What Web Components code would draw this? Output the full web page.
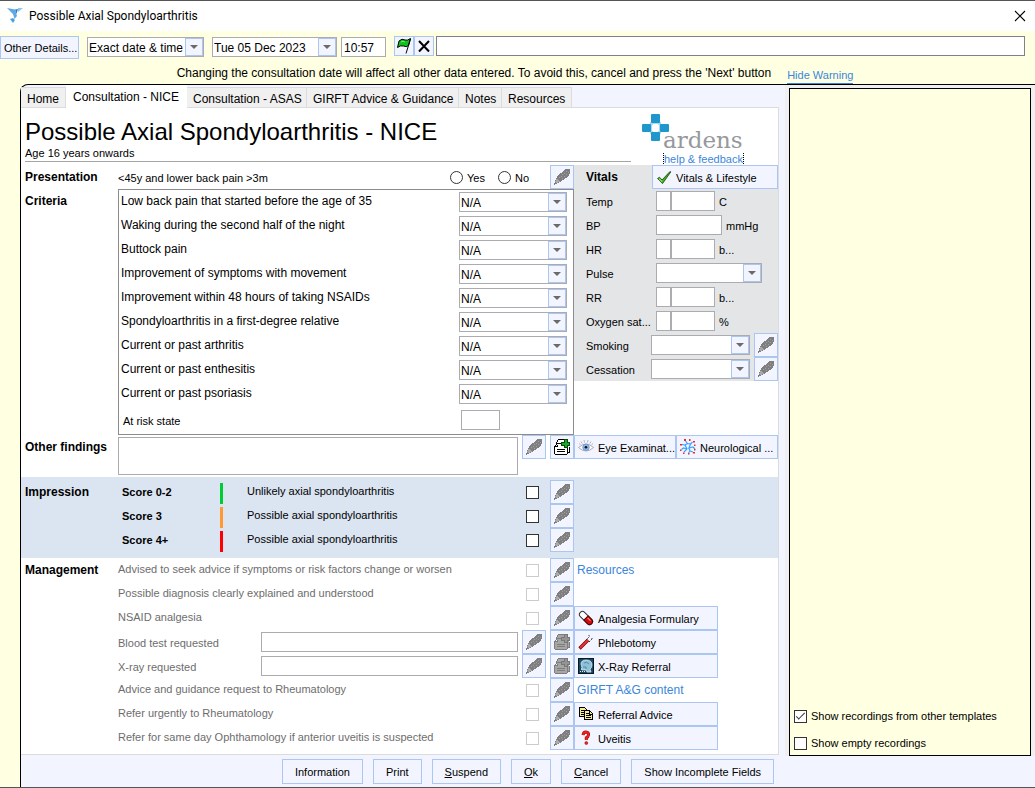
<!DOCTYPE html>
<html lang="en">
<head>
<meta charset="utf-8">
<title>Possible Axial Spondyloarthritis</title>
<style>
  html, body { height: 100%; margin: 0; }
  body { font: 11px/16px "Liberation Sans", Arial, sans-serif; color: #000; background: #ffffe1; }
</style>
</head>
<body>
<consult-window></consult-window>
<script>
const CONTROLS = `
  *, *::before, *::after { box-sizing: border-box; }
  button, input, select, textarea { font: inherit; color: inherit; margin: 0; border-radius: 0; }
  input[type=text], textarea, select {
    appearance: none; display: block; width: 100%; height: 20px; padding: 0 2px;
    border: 1px solid #acacb0; background: #fff; outline: none; resize: none;
  }
  select { font-size: 12px; padding: 1px 20px 0 1px; }
  .combo { position: relative; display: block; }
  .combo::before {
    content: ""; position: absolute; right: 1px; top: 1px; width: 18px; height: 18px;
    border: 1px solid #abc6f0; background: #f2f5ff; pointer-events: none;
  }
  .combo::after {
    content: ""; position: absolute; right: 6px; top: 8px; pointer-events: none;
    border: 4px solid transparent; border-top-color: #6a6a6a; border-bottom: 0;
  }
  input[type=checkbox] {
    appearance: none; width: 13px; height: 13px; border: 1px solid #333; background: #fff; flex: none;
    display: grid; place-content: center;
  }
  input[type=checkbox]:checked::before {
    content: ""; width: 9px; height: 4px; margin-bottom: 3px;
    border: solid #333; border-width: 0 0 1px 1px; transform: rotate(-45deg);
  }
  input[type=checkbox]:disabled { border-color: #ccc; }
  input[type=radio] {
    appearance: none; width: 13px; height: 13px; border: 1px solid #333; border-radius: 50%; background: #fff; flex: none;
  }
  a { color: #3a86dc; text-decoration: none; }
  h2 { margin: 0; padding-left: 4px; font-size: 12px; line-height: 24px; font-weight: bold; }
`;

function define(name, css, html) {
  customElements.define(name, class extends HTMLElement {
    connectedCallback() {
      if (this.shadowRoot) return;
      const t = document.createElement('template');
      t.innerHTML = `<style>${CONTROLS}${css}</style>` + (typeof html === 'function' ? html(this) : html);
      this.attachShadow({ mode: 'open' }).append(t.content.cloneNode(true));
    }
  });
}

const sheets = (paper, ink, plus, plusEdge) => `<g shape-rendering="crispEdges">
  <path fill="${ink}" d="M4 0h9v1H4zM3 1h1v3H3zM2 3h1v2H2zM15 8h1v6h-1zM14 13h1v1h-1z"/>
  <path fill="${paper}" d="M4 1h9v2H4zM3 3h10v2H3zM13 7h2v6h-2z"/>
  <path fill="${ink}" d="M3 4h10v1H3zM2 5h1v1H2zM1 6h1v1H1zM0 7h1v8H0zM1 15h12v1H1zM13 5h1v10h-1z"/>
  <path fill="${paper}" d="M3 5h10v10H1V7h2z"/>
  <path fill="${ink}" d="M3 6h1v2H3zM1 7h3v1H1zM3 10h8v1H3zM3 12h8v1H3z"/>
  <path fill="${plusEdge}" d="M10 0h4v3h2v4h-2v2h-4V7H7V3h3z"/><path fill="${plus}" d="M11 1h2v3h2v2h-2v2h-2V6H8V4h3z"/></g>`;

const ICONS = {
  pen: `<g shape-rendering="crispEdges"><path fill="#7f7f7f" d="M11 0h5v5h-1v2h-1v1h-1v1h-2v1h-1v1H8v1H7v1H5v1H3v1H1v1H0v-2h1v-3h1V9h1V7h1V6h1V5h1V4h2V3h1V2h1V1h1z"/>
    <path fill="#a9a9a9" d="M2 10h2v1h1v1h1v1H4v1H2v-1H1v-1h1z"/>
    <path fill="#a0a0a0" d="M12 2h1v1h-1zM10 4h1v1h-1zM8 5h1v1H8zM7 7h1v1H7zM5 8h1v1H5zM14 3h1v1h-1zM12 5h1v1h-1zM10 7h1v1h-1zM8 9h1v1H8z"/></g>`,
  copy: sheets('#fff', '#000', '#22a52e', '#004d0a'),
  copyOff: sheets('#a6a6a6', '#7d7d7d', '#949494', '#787878'),
  tick: `<path fill="#3fb618" stroke="#173d10" stroke-width=".8" d="M1.500 9.500l2-1.300L6 11 14 2.500l.8.4L6.500 14.600z"/><path stroke="#9be26a" stroke-width="1.200" d="M3 9.700l3 3"/>`,
  eye: `<path fill="#fff" stroke="#a2a2ae" stroke-width=".9" d="M.5 8.500Q8 1.500 15.500 8.500 8 15.500.5 8.500z"/>
    <path stroke="#8b8b98" stroke-width=".6" d="M1 4.500l1.500 1.300M3 2.500l1.200 2M6 1l.5 2.500M10 1l-.5 2.500M13 2.500l-1.200 2M15 4.500l-1.500 1.300"/>
    <circle cx="8" cy="8.300" r="3.300" fill="#8fb5ee" stroke="#6d8cc4" stroke-width=".7"/><circle cx="8" cy="8.300" r="1.300" fill="#111"/>`,
  neuro: `<path stroke="#3aa0ff" stroke-width="1.200" d="M5.500 2l2 2.500 3 .5 2-2M7.500 4.500L5 6l-3-.5M5 6l2 4-3 3M7 10L3.500 9 1.500 10.500M10.500 5L9 9l4-1 2 2M9 9l1 3-1.500 2M10 12l3 1"/>
    <path fill="#e32c2c" d="M4 0h2v2H4zM9 0h1.500v2H9zM13 2h2v1.500h-2zM0 5h2v1.500H0zM14 5.500h1.500V7H14zM0 10.500h1.500V12H0zM3 13.500h1.500V15H3zM8 14h1.500v1.500H8zM13 13h2v1.500h-2zM14 10h1.500v1.500H14z"/>`,
  pill: `<g transform="rotate(45 8 8)"><rect x="0" y="5" width="16" height="6" rx="3" fill="#fff" stroke="#333"/><path d="M8 5h5a3 3 0 0 1 0 6H8z" fill="#d30d0d" stroke="#500"/><path stroke="#f99" d="M9 6.700h4"/></g>`,
  tube: `<path stroke="#600" stroke-width="3.200" d="M1.500 14.500L10 6"/><path stroke="#f03030" stroke-width="1.900" d="M2 14l8-8"/><path stroke="#222" stroke-width=".9" d="M8.500 5.500l3-3M11 8l3-3" stroke-dasharray="1.500 1"/><path stroke="#222" stroke-width=".9" d="M10.500 2l1-1M13.500 5l1-1"/>`,
  xray: `<rect width="16" height="16" fill="#071a26"/><rect x="1" y="1" width="14" height="14" fill="#1a4a62"/><path fill="#8fc0d8" stroke="#e2f4fb" stroke-width=".7" d="M3 6q0-4 5-4 6 0 6 5 0 3-2 4l1 3H9l-1-2H4l-1-1 1-1z"/><path stroke="#4f8ba8" d="M5 9h3v2M6 5q3-2 5 1"/><path stroke="#d7eef8" stroke-dasharray="1 1" d="M2 13.500h5"/>`,
  pages: `<g shape-rendering="crispEdges"><path fill="#f3ee91" stroke="#000" d="M1.500 1.500h5l2 2v7h-7z"/><path stroke="#000" d="M3 4.500h3M3 6.500h3M3 8.500h3"/><path fill="#f3ee91" stroke="#000" d="M6.500 4.500h5l3 3v6h-8z"/><path stroke="#000" d="M8 7.500h3M8 9.500h5M8 11.500h5M11.500 5v3h3"/></g>`,
  question: `<path stroke="#900" stroke-width="3" d="M5 5Q5.500 2 8 2q2.800.2 2.500 2.800Q10 7 8.300 7.800V10"/><path stroke="#f02020" stroke-width="2" d="M5 5Q5.500 2 8 2q2.800.2 2.500 2.800Q10 7 8.300 7.800V10"/><circle cx="8.300" cy="13" r="1.500" fill="#f02020" stroke="#900" stroke-width=".5"/>`,
  flag: `<path fill="#0fc01a" stroke="#000" d="M3 3q3-3 6-1 2 1 5.500-1.500l-2 7q-2 2-5 .5Q4.500 7 1.500 9.500z"/><path stroke="#7be67f" d="M5 4q2-1.500 4 0"/><path stroke="#000" d="M14.500 1L10 15.500"/>`,
  cross: `<path stroke="#000" stroke-width="2" d="M3 3l10 10.500M13 3L3 13.500"/>`,
  close: `<path stroke="#000" stroke-width="1.100" d="M3 3l10 10M13 3L3 13"/>`,
  bird: `<path fill="#5ba8e5" d="M0 0l8 1.500L10 8l-2.500 3L6 6z"/><path fill="#2f7fc6" d="M8 1.500L11 1 9.500 6z"/><path fill="#8cc7f2" d="M11 0h5l-5 4z"/><path fill="#4f9fe0" d="M3 11l3-1 2 2-2 3z"/>`
};

define('consult-icon', `:host { display: block; width: 16px; height: 16px; flex: none; } svg { display: block; }`,
  el => `<svg width="16" height="16" viewBox="0 0 16 16" fill="none" aria-hidden="true">${ICONS[el.getAttribute('name')]}</svg>`);

/* Bordered push button with an optional icon before its text */
define('consult-button', `
  :host { display: block; min-width: 0; }
  button { display: flex; align-items: center; gap: 4px; width: 100%; height: var(--button-height, 24px);
    justify-content: var(--button-align, flex-start); padding: var(--button-pad, 0 3px);
    border: 1px solid #abc6f0; background: #f2f5ff; white-space: nowrap; }
  consult-icon + span { padding-top: 2px; }
`, el => `<button type="button" ${el.hasAttribute('label') ? `aria-label="${el.getAttribute('label')}"` : ''}>${
  el.hasAttribute('icon') ? `<consult-icon name="${el.getAttribute('icon')}"></consult-icon>` : ''}<span><slot></slot></span></button>`);

define('title-bar', `
  :host { display: flex; align-items: center; height: 31px; padding: 0 7px; border-top: 1px solid #555; background: #fff; }
  h1 { flex: 1; margin: 0 6px; font: 12px/16px Roboto, "Open Sans", sans-serif; }
  button { padding: 0; border: 0; background: none; }
`, `<consult-icon name="bird"></consult-icon><h1>Possible Axial Spondyloarthritis</h1>
  <button type="button" aria-label="Close"><consult-icon name="close"></consult-icon></button>`);

define('date-bar', `
  :host { display: block; background: #ffffe1; height: 53px; padding-top: 5px; }
  .fields { display: flex; gap: 8px; padding-right: 10px; }
  .fields > * { flex: none; }
  .fields input { font-size: 12px; }
  .details { width: 79px; --button-height: 23px; }
  .kind { width: 117px; margin-top: 1px; }
  .when { display: flex; gap: 4px; margin-top: 1px; }
  .when .combo { width: 125px; }
  .when input { width: 45px; padding-top: 1px; }
  .tools { flex: 1; display: flex; --button-height: 20px; --button-pad: 0 1px; }
  .tools consult-button { width: 20px; }
  .tools input { flex: 1; margin-left: 2px; border-color: #80808c; }
  p { display: flex; justify-content: center; gap: 16px; margin: 6px 0 0; padding-right: 5px; font-size: 12px; }
  a { font-size: 11px; line-height: 15px; height: 16px; margin-top: 3px; border-bottom: 1px solid #3a86dc; }
`, `<div class="fields">
    <consult-button class="details">Other Details...</consult-button>
    <span class="combo kind"><select aria-label="Date type"><option>Exact date &amp; time</option></select></span>
    <div class="when"><span class="combo"><select aria-label="Date"><option>Tue 05 Dec 2023</option></select></span>
    <input type="text" aria-label="Time" value="10:57"></div>
    <div class="tools"><consult-button icon="flag" label="Flag"></consult-button><consult-button icon="cross" label="Clear"></consult-button>
    <input type="text" aria-label="Comment"></div>
  </div>
  <p><span>Changing the consultation date will affect all other data entered. To avoid this, cancel and press the 'Next' button</span><a href="#">Hide Warning</a></p>`);

define('tab-strip', `
  :host { display: grid; grid-template-columns: 45px 121px 120px 152px 43px 70px; align-items: end; height: 23px; border-bottom: 1px solid #dcdcdc; }
  button { height: 20px; padding: 2px 0 0 6px; border: solid #dcdcdc; border-width: 1px 1px 0 0; background: #f0f0f0; font-size: 12px; text-align: left; white-space: nowrap; }
  [aria-selected=true] { height: 23px; margin-bottom: -1px; padding: 0 0 0 7px; background: #fff; border-color: #fff; }
  button:first-child { padding-left: 8px; }
`, `<button type="button" role="tab">Home</button><button type="button" role="tab" aria-selected="true">Consultation - NICE</button>
  <button type="button" role="tab">Consultation - ASAS</button><button type="button" role="tab">GIRFT Advice &amp; Guidance</button>
  <button type="button" role="tab">Notes</button><button type="button" role="tab">Resources</button>`);

define('page-header', `
  :host { display: grid; grid-template-columns: minmax(0, 1fr) 137px; height: 57px; }
  header { padding: 10px 0 0 4px; height: 54px; margin-right: 10px; background: linear-gradient(#a5a5a5, #a5a5a5) 4px 100% / 100% 1px no-repeat; }
  h1 { margin: 0; font-size: 24px; line-height: 28px; font-weight: normal; white-space: nowrap; }
  p { margin: 0; line-height: 15px; }
  .brand { padding-top: 6px; }
  .logo { display: flex; height: 39px; }
  .logo svg { flex: none; margin-left: 1px; }
  .logo span { margin: 10px 0 0 -7px; font: 23px/32px "DejaVu Serif", serif; color: #96989c; }
  a { display: block; width: 81px; height: 13px; margin-left: 22px; line-height: 13px; white-space: nowrap;
    border: dotted #000; border-width: 0 1px; box-shadow: inset 0 -1px #3a86dc; }
`, `<header><h1>Possible Axial Spondyloarthritis - NICE</h1><p>Age 16 years onwards</p></header>
  <div class="brand"><div class="logo">
    <svg width="28" height="28" viewBox="0 0 28 28" fill="#1f97cd" aria-hidden="true"><path fill="#a9d9ee" d="M8 8h11v12H8z"/><path fill="#fff" d="M11 10h5v1h1v6h-1v1h-5v-1h-1v-6h1z"/>
    <rect x="9" y="0" width="9" height="9" rx="1"/><rect x="0" y="10" width="9" height="8" rx="1"/><rect x="18" y="10" width="9" height="8" rx="1"/><rect x="9" y="18" width="9" height="9" rx="1"/></svg>
    <span>ardens</span></div><a href="#">help &amp; feedback</a></div>`);

define('presentation-row', `
  :host { display: grid; grid-template-columns: 97px minmax(0, 1fr) auto 24px; height: 24px; align-items: center; }
  .text { padding-top: 2px; }
  .options { display: flex; gap: 13px; padding-right: 21px; }
  label { display: flex; align-items: center; gap: 4px; }
  label span { padding-top: 2px; }
`, `<h2>Presentation</h2><span class="text">&lt;45y and lower back pain &gt;3m</span>
  <div class="options"><label><input type="radio" name="pain"><span>Yes</span></label><label><input type="radio" name="pain"><span>No</span></label></div>
  <consult-button icon="pen" label="Note"></consult-button>`);

define('criteria-row', `
  :host { display: grid; grid-template-columns: minmax(0, 1fr) 108px; align-items: center; height: 24px; padding: 0 6px 0 2px; }
  label { font-size: 12px; padding-bottom: 2px; }
`, el => `<label for="answer">${el.getAttribute('label')}</label><span class="combo"><select id="answer"><option>N/A</option><option>Yes</option><option>No</option></select></span>`);

define('criteria-box', `
  :host { display: grid; grid-template-columns: 97px minmax(0, 1fr); }
  .box { border: 1px solid #8c8c8c; }
  .risk { display: grid; grid-template-columns: minmax(0, 1fr) 112px; align-items: center; height: 28px; padding-left: 4px; }
  .risk label { padding-top: 2px; }
  .risk input { width: 39px; }
`, `<h2>Criteria</h2><div class="box">
  ${['Low back pain that started before the age of 35', 'Waking during the second half of the night', 'Buttock pain', 'Improvement of symptoms with movement',
    'Improvement within 48 hours of taking NSAIDs', 'Spondyloarthritis in a first-degree relative', 'Current or past arthritis', 'Current or past enthesitis',
    'Current or past psoriasis'].map(t => `<criteria-row label="${t}"></criteria-row>`).join('')}
  <div class="risk"><label for="risk">At risk state</label><input type="text" id="risk"></div></div>`);

/* kind: number (prefix + value), text, combo, or noted (combo with a note button) */
const VITAL = {
  number: el => `<div class="pair"><input type="text" aria-label="Qualifier"><input type="text" id="v"></div><span>${el.getAttribute('unit')}</span>`,
  text: el => `<input type="text" id="v"><span>${el.getAttribute('unit')}</span>`,
  combo: () => `<span class="combo"><select id="v"><option></option></select></span>`,
  noted: () => `<span class="combo"><select id="v"><option></option></select></span><consult-button icon="pen" label="Note"></consult-button>`
};
define('vital-row', `
  :host { display: grid; grid-template-columns: 70px 66px 1fr; align-items: center; height: 24px; padding-left: 12px; }
  :host([kind=number]) { grid-template-columns: 70px 59px 1fr; }
  :host([kind=combo]) { grid-template-columns: 70px 106px; }
  :host([kind=noted]) { grid-template-columns: 65px 103px 24px; }
  :host([kind=noted]) .combo { margin-right: 4px; }
  label { white-space: nowrap; padding-top: 2px; }
  .pair { display: grid; grid-template-columns: 15px 1fr; }
  span:not(.combo) { padding: 2px 0 0 4px; }
`, el => `<label for="v">${el.getAttribute('label')}</label>${VITAL[el.getAttribute('kind')](el)}`);

define('vitals-panel', `
  :host { display: block; background: #e3e5e7; }
  .head { display: grid; grid-template-columns: minmax(0, 1fr) 126px; }
  h2 { padding-left: 12px; }
`, `<div class="head"><h2>Vitals</h2><consult-button icon="tick">Vitals &amp; Lifestyle</consult-button></div>
  <vital-row kind="number" label="Temp" unit="C"></vital-row><vital-row kind="text" label="BP" unit="mmHg"></vital-row>
  <vital-row kind="number" label="HR" unit="b..."></vital-row><vital-row kind="combo" label="Pulse"></vital-row>
  <vital-row kind="number" label="RR" unit="b..."></vital-row><vital-row kind="number" label="Oxygen sat..." unit="%"></vital-row>
  <vital-row kind="noted" label="Smoking"></vital-row><vital-row kind="noted" label="Cessation"></vital-row>`);

define('findings-row', `
  :host { display: grid; grid-template-columns: 97px minmax(0, 1fr) 28px 24px 102px 102px; height: 42px; align-items: start; }
  textarea { height: 38px; margin: 2px 0 0; width: calc(100% - 4px); }
  .pen { width: 24px; }
`, `<h2><label for="findings">Other findings</label></h2><textarea id="findings"></textarea>
  <consult-button class="pen" icon="pen" label="Note"></consult-button><consult-button icon="copy" label="Add document"></consult-button>
  <consult-button icon="eye">Eye Examinat...</consult-button><consult-button icon="neuro">Neurological ...</consult-button>`);

define('score-row', `
  :host { display: grid; grid-template-columns: 98px 31px minmax(0, 1fr) 24px 24px; align-items: center; height: 24px; }
  b { padding-left: 4px; }
  i { width: 3px; height: 21px; margin-top: 3px; margin-left: 4px; background: var(--level); }
  label { padding-bottom: 2px; }
`, el => `<b>${el.getAttribute('score')}</b><i></i><label for="c">${el.getAttribute('label')}</label><input type="checkbox" id="c"><consult-button icon="pen" label="Note"></consult-button>`);

define('impression-section', `
  :host { display: grid; grid-template-columns: 97px minmax(0, 1fr) 204px; padding: 3px 0 6px; background: #dbe5f1; }
`, `<h2>Impression</h2><div>
  <score-row score="Score 0-2" label="Unlikely axial spondyloarthritis" style="--level:#00cc33"></score-row>
  <score-row score="Score 3" label="Possible axial spondyloarthritis" style="--level:#ff9933"></score-row>
  <score-row score="Score 4+" label="Possible axial spondyloarthritis" style="--level:#ff0000"></score-row></div>`);

define('plan-row', `
  :host { display: grid; grid-template-columns: minmax(0, 1fr) 24px 24px 204px; align-items: center; height: 24px; }
  label { padding-bottom: 2px; color: #6d6d6d; }
  :host([field]) { grid-template-columns: 143px minmax(0, 1fr) 28px 24px 204px; }
  :host([field]) label { padding: 2px 0 0; }
  :host([field]) input { width: calc(100% - 4px); }
  .pen { width: 24px; }
  ::slotted(consult-button) { width: 144px; }
  ::slotted(a) { padding-left: 3px; font-size: 12px; color: #3a86dc; text-decoration: none; }
`, el => `<label for="c">${el.getAttribute('label')}</label>` + (el.hasAttribute('field')
  ? `<input type="text" id="c"><consult-button class="pen" icon="pen" label="Note"></consult-button><consult-button icon="copyOff" label="Add document"></consult-button>`
  : `<input type="checkbox" id="c" disabled><consult-button icon="pen" label="Note"></consult-button>`) + `<slot></slot>`);

define('management-section', `
  :host { display: grid; grid-template-columns: 97px minmax(0, 1fr); padding-bottom: 4px; }
`, `<h2>Management</h2><div>
  <plan-row label="Advised to seek advice if symptoms or risk factors change or worsen"><a href="#">Resources</a></plan-row>
  <plan-row label="Possible diagnosis clearly explained and understood"></plan-row>
  <plan-row label="NSAID analgesia"><consult-button icon="pill">Analgesia Formulary</consult-button></plan-row>
  <plan-row field label="Blood test requested"><consult-button icon="tube">Phlebotomy</consult-button></plan-row>
  <plan-row field label="X-ray requested"><consult-button icon="xray">X-Ray Referral</consult-button></plan-row>
  <plan-row label="Advice and guidance request to Rheumatology"><a href="#">GIRFT A&amp;G content</a></plan-row>
  <plan-row label="Refer urgently to Rheumatology"><consult-button icon="pages">Referral Advice</consult-button></plan-row>
  <plan-row label="Refer for same day Ophthamology if anterior uveitis is suspected"><consult-button icon="question">Uveitis</consult-button></plan-row></div>`);

define('template-page', `
  :host { display: block; background: #fff; border: solid #dcdcdc; border-width: 0 1px 1px 0; }
  .top { display: grid; grid-template-columns: minmax(0, 1fr) 204px; align-items: start; }
`, `<page-header></page-header>
  <div class="top"><div><presentation-row></presentation-row><criteria-box></criteria-box></div><vitals-panel></vitals-panel></div>
  <findings-row></findings-row><impression-section></impression-section><management-section></management-section>`);

define('recordings-panel', `
  :host { display: flex; padding: 3px 4px 0 4px; background: #f0f0f0; }
  div { flex: 1; display: flex; flex-direction: column; justify-content: flex-end; gap: 11px; padding: 0 4px 4px; border: 1px solid #000; background: #ffffe1; }
  label { display: flex; align-items: center; gap: 4px; }
`, `<div><label><input type="checkbox" checked>Show recordings from other templates</label><label><input type="checkbox">Show empty recordings</label></div>`);

define('action-bar', `
  :host { display: flex; justify-content: center; gap: 10px; padding: 3px 0; --button-height: 25px; --button-pad: 0 12px; }
`, `<consult-button>Information</consult-button><consult-button>Print</consult-button><consult-button><u>S</u>uspend</consult-button>
  <consult-button><u>O</u>k</consult-button><consult-button><u>C</u>ancel</consult-button><consult-button>Show Incomplete Fields</consult-button>`);

define('consult-window', `
  :host { display: flex; flex-direction: column; min-height: 100vh; box-sizing: border-box; border-bottom: 1px solid #555; }
  main { flex: 1; margin-left: 20px; border: solid #000; border-width: 1px 0 0 1px; border-top-left-radius: 8px; background: #f2f5ff; display: flex; flex-direction: column; }
  .body { flex: 1; display: grid; grid-template-columns: minmax(0, 1fr) 250px; }
  .sheet { padding: 0 6px 1px 0; }
`, `<title-bar></title-bar><date-bar></date-bar>
  <main><div class="body"><div class="sheet"><tab-strip></tab-strip><template-page></template-page></div><recordings-panel></recordings-panel></div>
  <action-bar></action-bar></main>`);
</script>
</body>
</html>
